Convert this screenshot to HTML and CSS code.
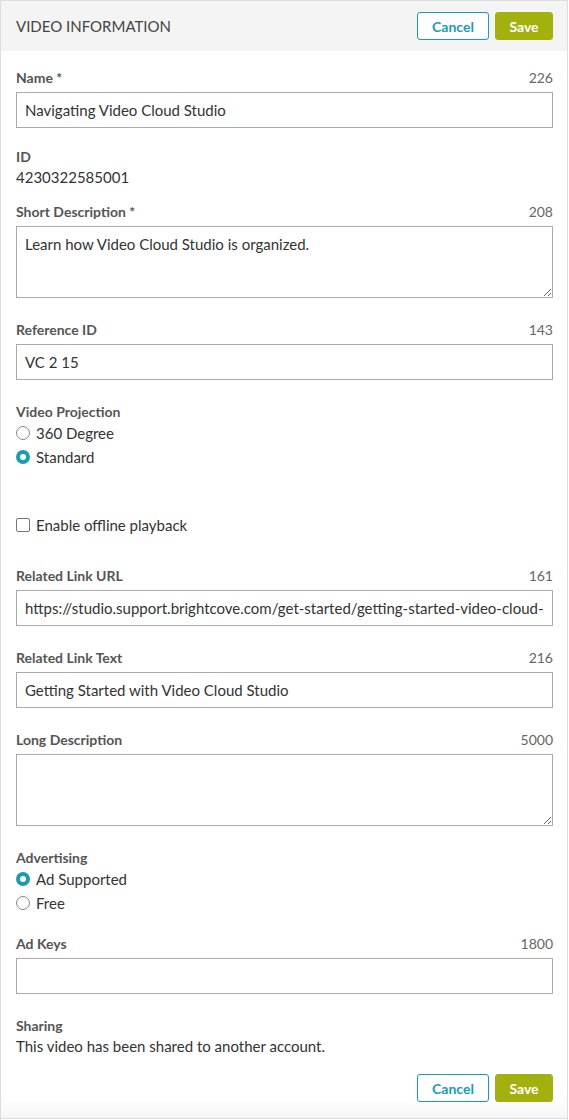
FILE: index.html
```html
<!DOCTYPE html>
<html>
<head>
<meta charset="utf-8">
<link rel="stylesheet" href="styles.css">
</head>
<body>
<div class="panel">
  <div class="header">
    <div class="title">VIDEO INFORMATION</div>
    <div class="actions">
      <button class="btn btn-cancel">Cancel</button>
      <button class="btn btn-save">Save</button>
    </div>
  </div>
  <div class="content">
    <div class="field field-first">
      <div class="label-row"><span class="label">Name *</span><span class="count">226</span></div>
      <input class="text-input" type="text" value="Navigating Video Cloud Studio">
    </div>
    <div class="field field-static">
      <div class="label-row"><span class="label">ID</span></div>
      <div class="value">4230322585001</div>
    </div>
    <div class="field">
      <div class="label-row"><span class="label">Short Description *</span><span class="count">208</span></div>
      <textarea class="text-area">Learn how Video Cloud Studio is organized.</textarea>
    </div>
    <div class="field">
      <div class="label-row"><span class="label">Reference ID</span><span class="count">143</span></div>
      <input class="text-input" type="text" value="VC 2 15">
    </div>
    <div class="field field-radios">
      <div class="label-row"><span class="label">Video Projection</span></div>
      <label class="option"><input class="radio" type="radio" name="proj"><span>360 Degree</span></label>
      <label class="option"><input class="radio" type="radio" name="proj" checked><span>Standard</span></label>
    </div>
    <div class="field field-check">
      <label class="option"><input class="checkbox" type="checkbox"><span>Enable offline playback</span></label>
    </div>
    <div class="field">
      <div class="label-row"><span class="label">Related Link URL</span><span class="count">161</span></div>
      <input class="text-input" type="text" value="https://studio.support.brightcove.com/get-started/getting-started-video-cloud-studio.html">
    </div>
    <div class="field">
      <div class="label-row"><span class="label">Related Link Text</span><span class="count">216</span></div>
      <input class="text-input" type="text" value="Getting Started with Video Cloud Studio">
    </div>
    <div class="field">
      <div class="label-row"><span class="label">Long Description</span><span class="count">5000</span></div>
      <textarea class="text-area"></textarea>
    </div>
    <div class="field field-radios2">
      <div class="label-row"><span class="label">Advertising</span></div>
      <label class="option"><input class="radio" type="radio" name="ads" checked><span>Ad Supported</span></label>
      <label class="option"><input class="radio" type="radio" name="ads"><span>Free</span></label>
    </div>
    <div class="field">
      <div class="label-row"><span class="label">Ad Keys</span><span class="count">1800</span></div>
      <input class="text-input" type="text" value="">
    </div>
    <div class="field field-static field-last">
      <div class="label-row"><span class="label">Sharing</span></div>
      <div class="value">This video has been shared to another account.</div>
    </div>
  </div>
  <div class="footer">
    <button class="btn btn-cancel">Cancel</button>
    <button class="btn btn-save">Save</button>
  </div>
</div>
</body>
</html>
```

FILE: styles.css
```css
* { box-sizing: border-box; }
html, body { margin: 0; padding: 0; background: #fff; }
body { font-family: Lato, "Open Sans", sans-serif; color: #333; }

.panel {
  width: 568px;
  height: 1120px;
  border: 1px solid #dcdcdc;
  border-bottom: none;
  background: #fff;
  display: flex;
  flex-direction: column;
}

.header {
  height: 50px;
  flex: none;
  background: #f4f4f4;
  display: flex;
  align-items: center;
  justify-content: space-between;
  padding: 0 14px 0 15px;
}
.title { font-size: 15px; color: #444; }
.actions { display: flex; gap: 6px; }

.btn {
  font-family: Lato, sans-serif;
  font-weight: 700;
  font-size: 14px;
  height: 28px;
  border-radius: 3px;
  padding: 0;
  cursor: pointer;
}
.btn-cancel { width: 72px; background: #fff; border: 1px solid #1a9bb2; color: #1a9bb2; }
.btn-save { width: 58px; background: #a3b10f; border: 1px solid #a3b10f; color: #fff; }

.content { padding: 16px 14px 0 15px; flex: none; }

.field { margin-bottom: 21px; }
.field-first { margin-bottom: 18px; }
.field-static { margin-bottom: 14px; }
.field-last { margin-bottom: 0; }
.field-radios { margin-bottom: 46px; }
.field-check { margin-bottom: 30px; }
.field-radios2 { margin-bottom: 18px; }

.label-row {
  display: flex;
  justify-content: space-between;
  align-items: center;
  height: 20px;
  margin-bottom: 5px;
}
.field-static .label-row,
.field-radios .label-row,
.field-radios2 .label-row { margin-bottom: 0; }
.label { font-weight: 700; font-size: 14px; color: #555; }
.count { font-size: 14px; color: #666; }
.value { font-size: 15px; color: #333; line-height: 20px; margin-top: 1px; }

.text-input {
  display: block;
  width: 100%;
  height: 36px;
  margin: 0;
  border: 1px solid #aaa;
  border-radius: 0;
  padding: 0 8px;
  font-family: Lato, sans-serif;
  font-size: 15px;
  color: #333;
  outline: none;
}
.text-area {
  display: block;
  width: 100%;
  height: 72px;
  margin: 0;
  border: 1px solid #aaa;
  border-radius: 0;
  padding: 8px 8px;
  font-family: Lato, sans-serif;
  font-size: 15px;
  color: #333;
  resize: vertical;
}

.option {
  display: flex;
  align-items: center;
  height: 24px;
  font-size: 15px;
  color: #333;
}
.option span { margin-left: 6px; }
.field-check .option { height: 20px; }

.radio {
  appearance: none;
  -webkit-appearance: none;
  margin: 0;
  width: 14px;
  height: 14px;
  border: 1px solid #888;
  border-radius: 50%;
  background: #fff;
}
.radio:checked {
  border: 4px solid #1a9bb2;
  background: #fff;
}
.checkbox {
  appearance: none;
  -webkit-appearance: none;
  margin: 0;
  width: 14px;
  height: 14px;
  border: 1px solid #777;
  border-radius: 2px;
  background: #fff;
}

.footer {
  flex: 1;
  display: flex;
  justify-content: flex-end;
  align-items: flex-start;
  gap: 6px;
  padding: 18px 14px 0 15px;
  border-bottom: 1px solid #dcdcdc;
  margin-bottom: 1px;
  background: linear-gradient(#fff 70%, #f6f6f6);
}
```
